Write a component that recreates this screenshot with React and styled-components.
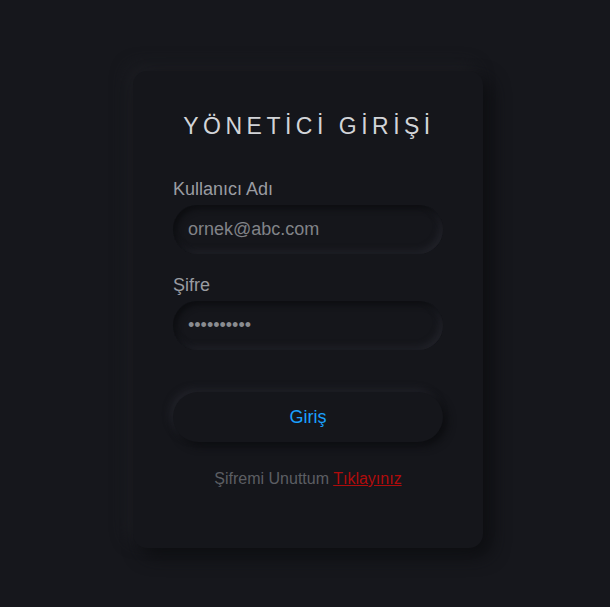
import React from "react";
import styled, { createGlobalStyle } from "styled-components";

const Global = createGlobalStyle`
  html, body {
    margin: 0;
    padding: 0;
    background: #16171c;
    font-family: "Liberation Sans", Arial, sans-serif;
  }
`;

const Page = styled.div`
  min-height: 607px;
  display: flex;
  justify-content: center;
  align-items: flex-start;
  padding: 71px 0 0 6px;
  box-sizing: border-box;
`;

const Card = styled.form`
  width: 350px;
  height: 477px;
  box-sizing: border-box;
  padding: 40px 40px 0;
  background: #15161b;
  border-radius: 14px;
  box-shadow: 8px 8px 18px #0d0e11, -6px -6px 16px #1d1e23;
  display: flex;
  flex-direction: column;
`;

const Title = styled.h2`
  margin: 0;
  text-align: center;
  font-size: 23px;
  font-weight: normal;
  letter-spacing: 4.5px;
  line-height: 30px;
  color: #d2d4d8;
  padding-left: 2px;
`;

const Field = styled.div`
  display: flex;
  flex-direction: column;
  margin-top: ${(p) => p.$top}px;
`;

const Label = styled.label`
  font-size: 18px;
  line-height: 20px;
  color: #9a9ca2;
  margin-bottom: 6px;
`;

const Input = styled.input`
  width: 270px;
  height: 49px;
  box-sizing: border-box;
  border: none;
  outline: none;
  border-radius: 25px;
  padding: 0 15px;
  background: #15161b;
  font-family: inherit;
  font-size: 18px;
  color: #8a8c90;
  box-shadow: inset 3px 3px 6px #0c0d10, inset -3px -3px 6px #22232a;
  &::placeholder {
    color: #818388;
  }
`;

const Button = styled.button`
  margin-top: 42px;
  width: 270px;
  height: 50px;
  border: none;
  border-radius: 25px;
  background: #15161b;
  font-family: inherit;
  font-size: 18px;
  color: #1aa0ff;
  cursor: pointer;
  box-shadow: 4px 4px 8px #0c0d10, -3px -3px 7px #22232a;
`;

const Footer = styled.p`
  margin: 28px 0 0;
  text-align: center;
  font-size: 16px;
  line-height: 18px;
  color: #5c5e63;
`;

const Link = styled.a`
  color: #b00c0c;
  text-decoration: underline;
`;

export default function App() {
  return (
    <>
      <Global />
      <Page>
        <Card onSubmit={(e) => e.preventDefault()}>
          <Title>YÖNETİCİ GİRİŞİ</Title>
          <Field $top={38}>
            <Label>Kullanıcı Adı</Label>
            <Input type="text" placeholder="ornek@abc.com" />
          </Field>
          <Field $top={21}>
            <Label>Şifre</Label>
            <Input type="password" defaultValue="1234567890" />
          </Field>
          <Button type="submit">Giriş</Button>
          <Footer>
            Şifremi Unuttum <Link href="#">Tıklayınız</Link>
          </Footer>
        </Card>
      </Page>
    </>
  );
}
